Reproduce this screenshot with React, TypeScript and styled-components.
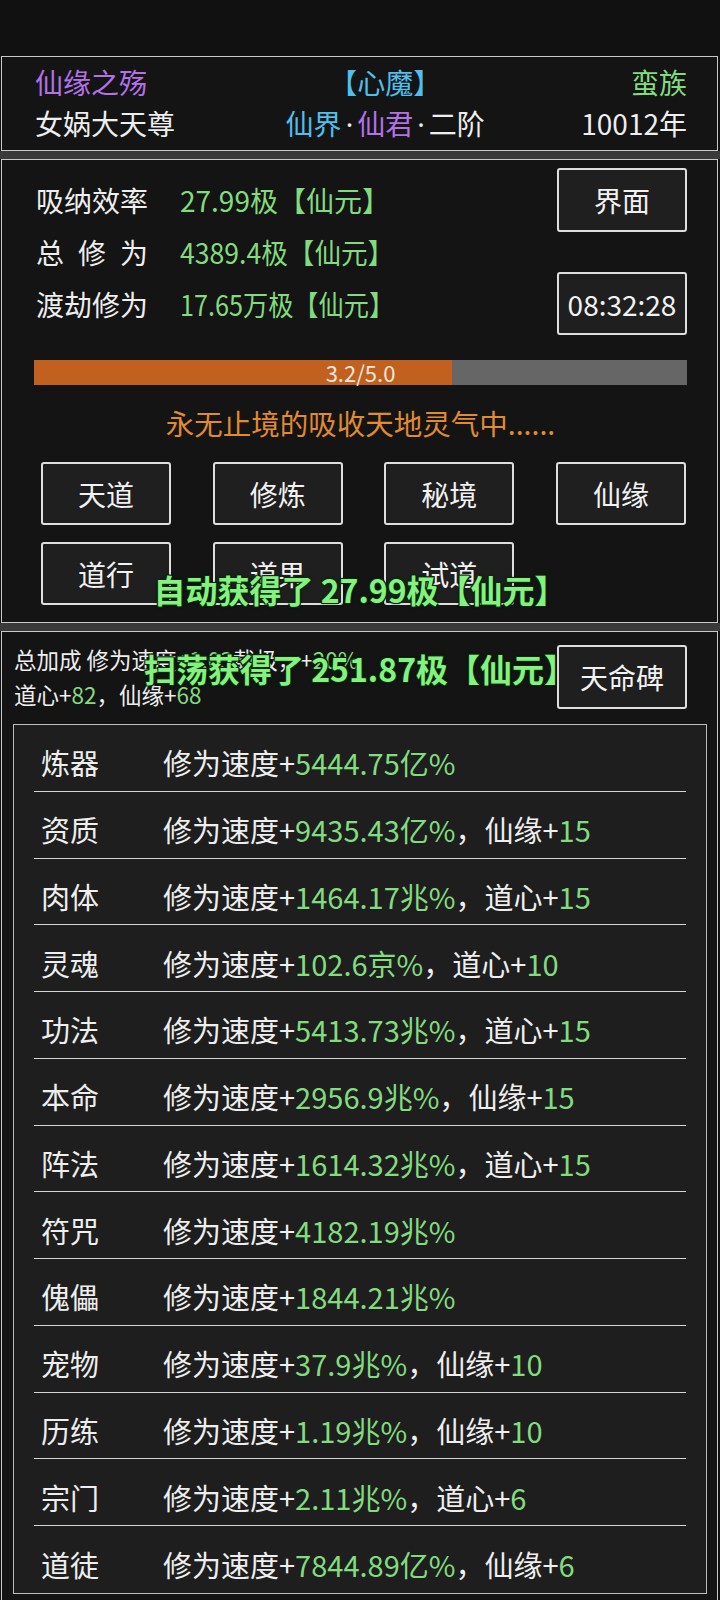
import React from 'react';
import styled, { createGlobalStyle } from 'styled-components';

const Global = createGlobalStyle`
  html, body { margin: 0; padding: 0; background: #111111; }
  body {
    font-family: "Noto Sans CJK SC", "Noto Sans", sans-serif;
    color: #eeeeee;
  }
  * { box-sizing: border-box; }
`;

const C = {
  purple: '#b272e6',
  cyan: '#4fc0ea',
  green: '#82dc7e',
  orange: '#e08a32',
  border: '#c8c8c8',
  panel: '#141414',
  box: '#1e1e1e',
};

const Page = styled.div`
  position: relative;
  width: 720px;
  background: #111111;
  display: flex;
  flex-direction: column;
`;

const StatusBar = styled.div`
  height: 56px;
  background: #111111;
`;

const Band = styled.div`
  height: 8px;
  background: #3a3a3a;
`;

const Panel = styled.section<{ $pad: string }>`
  margin: 0 2px 0 1px;
  background: ${C.panel};
  border: 1px solid ${C.border};
  padding: ${(p) => p.$pad};
`;

const Tone = styled.span<{ $c?: string }>`
  color: ${(p) => p.$c || '#eeeeee'};
`;

const Dot = styled.span`
  font-family: "Noto Sans", "Liberation Sans", sans-serif;
  color: #eeeeee;
  padding: 0 4px;
`;

/* ---------- header ---------- */
const HeaderRow = styled.div`
  display: flex;
  justify-content: space-between;
  font-size: 28px;
  line-height: 41px;
`;

const HeaderCol = styled.div<{ $align: string; $shift?: number }>`
  display: flex;
  flex-direction: column;
  text-align: ${(p) => p.$align};
  margin-left: ${(p) => p.$shift || 0}px;
  white-space: nowrap;
`;

/* ---------- stats panel ---------- */
const TopSection = styled.div`
  display: flex;
  justify-content: space-between;
  align-items: center;
`;

const StatList = styled.div`
  display: flex;
  flex-direction: column;
  padding-left: 2px;
`;

const StatRow = styled.div`
  display: flex;
  font-size: 28px;
  line-height: 52px;
  white-space: nowrap;
`;

const StatLabel = styled.span<{ $spread?: boolean }>`
  width: 144px;
  letter-spacing: ${(p) => (p.$spread ? '14px' : '0')};
`;

const StatValue = styled.span<{ $sx: number }>`
  display: inline-block;
  color: ${C.green};
  transform: scaleX(${(p) => p.$sx});
  transform-origin: left center;
`;

const SideButtons = styled.div`
  display: flex;
  flex-direction: column;
  justify-content: space-between;
  height: 167px;
`;

const Btn = styled.div<{ $h?: number }>`
  width: 130px;
  height: ${(p) => p.$h || 63}px;
  border: 2px solid #dedede;
  border-radius: 3px;
  background: #1f1f1f;
  color: #f2f2f2;
  font-size: 28px;
  display: flex;
  align-items: center;
  justify-content: center;
  white-space: nowrap;
`;

const Progress = styled.div`
  position: relative;
  margin-top: 25px;
  height: 25px;
  background: #666666;
  display: flex;
  align-items: center;
  justify-content: center;
`;

const ProgressFill = styled.div`
  position: absolute;
  left: 0;
  top: 0;
  bottom: 0;
  background: #c2601f;
`;

const ProgressText = styled.span`
  position: relative;
  font-size: 22px;
  line-height: 25px;
  color: #f4e8dc;
`;

const Status = styled.div`
  margin-top: 18px;
  text-align: center;
  font-size: 28.5px;
  line-height: 40px;
  color: ${C.orange};
`;

const ButtonGrid = styled.div`
  margin: 19px 1px 0 7px;
  display: grid;
  grid-template-columns: repeat(4, 130px);
  justify-content: space-between;
  row-gap: 17px;
`;

/* ---------- bonus panel ---------- */
const BonusHead = styled.div`
  display: flex;
  justify-content: space-between;
  align-items: center;
  padding: 0 20px 0 1px;
`;

const BonusText = styled.div`
  font-size: 22.5px;
  line-height: 35px;
  color: #eeeeee;
  white-space: nowrap;
`;

const BonusBox = styled.div`
  margin-top: 12px;
  border: 1px solid #bdbdbd;
  background: ${C.box};
  padding: 0 20px;
`;

const BonusRow = styled.div`
  height: 66.75px;
  padding: 9px 0 0 7px;
  display: flex;
  align-items: center;
  font-size: 29px;
  white-space: nowrap;
  border-bottom: 1px solid #d6d6d6;
  &:last-child { border-bottom: none; }
`;

const RowLabel = styled.span`
  width: 122px;
  color: #eeeeee;
`;

/* ---------- toasts ---------- */
const Toast = styled.div<{ $top: number }>`
  position: absolute;
  left: 0;
  right: 0;
  top: ${(p) => p.$top}px;
  text-align: center;
  font-size: 32px;
  font-weight: 700;
  line-height: 40px;
  color: #84f27e;
  text-shadow:
    -1px -1px 0 #0a2a0a, 1px -1px 0 #0a2a0a, -1px 1px 0 #0a2a0a, 1px 1px 0 #0a2a0a,
    0 0 3px #000;
  pointer-events: none;
  white-space: nowrap;
`;

type Bonus = { name: string; speed: string; extra?: [string, string] };

const bonuses: Bonus[] = [
  { name: '炼器', speed: '5444.75亿%' },
  { name: '资质', speed: '9435.43亿%', extra: ['仙缘', '15'] },
  { name: '肉体', speed: '1464.17兆%', extra: ['道心', '15'] },
  { name: '灵魂', speed: '102.6京%', extra: ['道心', '10'] },
  { name: '功法', speed: '5413.73兆%', extra: ['道心', '15'] },
  { name: '本命', speed: '2956.9兆%', extra: ['仙缘', '15'] },
  { name: '阵法', speed: '1614.32兆%', extra: ['道心', '15'] },
  { name: '符咒', speed: '4182.19兆%' },
  { name: '傀儡', speed: '1844.21兆%' },
  { name: '宠物', speed: '37.9兆%', extra: ['仙缘', '10'] },
  { name: '历练', speed: '1.19兆%', extra: ['仙缘', '10'] },
  { name: '宗门', speed: '2.11兆%', extra: ['道心', '6'] },
  { name: '道徒', speed: '7844.89亿%', extra: ['仙缘', '6'] },
];

const stats: { label: string; spread?: boolean; value: string; sx: number }[] = [
  { label: '吸纳效率', value: '27.99极【仙元】', sx: 1.0 },
  { label: '总修为', spread: true, value: '4389.4极【仙元】', sx: 0.95 },
  { label: '渡劫修为', value: '17.65万极【仙元】', sx: 0.9 },
];

const progress = 3.2 / 5.0;

export default function App() {
  return (
    <Page>
      <Global />
      <StatusBar />

      <Panel $pad="5px 30px 5px 33px">
        <HeaderRow>
          <HeaderCol $align="left">
            <Tone $c={C.purple}>仙缘之殇</Tone>
            <Tone>女娲大天尊</Tone>
          </HeaderCol>
          <HeaderCol $align="center" $shift={14}>
            <Tone $c={C.cyan}>【心魔】</Tone>
            <span>
              <Tone $c={C.cyan}>仙界</Tone>
              <Dot>·</Dot>
              <Tone $c={C.purple}>仙君</Tone>
              <Dot>·</Dot>
              <Tone>二阶</Tone>
            </span>
          </HeaderCol>
          <HeaderCol $align="right">
            <Tone $c={C.green}>蛮族</Tone>
            <Tone>10012年</Tone>
          </HeaderCol>
        </HeaderRow>
      </Panel>

      <Band />

      <Panel $pad="8px 30px 17px 32px">
        <TopSection>
          <StatList>
            {stats.map((s) => (
              <StatRow key={s.label}>
                <StatLabel $spread={s.spread}>{s.label}</StatLabel>
                <StatValue $sx={s.sx}>{s.value}</StatValue>
              </StatRow>
            ))}
          </StatList>
          <SideButtons>
            <Btn $h={64}>界面</Btn>
            <Btn $h={63}>08:32:28</Btn>
          </SideButtons>
        </TopSection>

        <Progress>
          <ProgressFill style={{ width: `${progress * 100}%` }} />
          <ProgressText>3.2/5.0</ProgressText>
        </Progress>

        <Status>永无止境的吸收天地灵气中......</Status>

        <ButtonGrid>
          {['天道', '修炼', '秘境', '仙缘', '道行', '道果', '试道'].map((t) => (
            <Btn key={t}>{t}</Btn>
          ))}
        </ButtonGrid>
      </Panel>

      <Band />

      <Panel $pad="10px 10px 14px 11px">
        <BonusHead>
          <BonusText>
            <div>
              总加成 修为速度+<Tone $c={C.green}>1.03</Tone>载极，+<Tone $c={C.green}>20%</Tone>
            </div>
            <div>
              道心+<Tone $c={C.green}>82</Tone>，仙缘+<Tone $c={C.green}>68</Tone>
            </div>
          </BonusText>
          <Btn $h={64}>天命碑</Btn>
        </BonusHead>

        <BonusBox>
          {bonuses.map((b) => (
            <BonusRow key={b.name}>
              <RowLabel>{b.name}</RowLabel>
              <span>
                修为速度+<Tone $c={C.green}>{b.speed}</Tone>
                {b.extra && (
                  <>
                    ，{b.extra[0]}+<Tone $c={C.green}>{b.extra[1]}</Tone>
                  </>
                )}
              </span>
            </BonusRow>
          ))}
        </BonusBox>
      </Panel>

      <Toast $top={569}>自动获得了 27.99极【仙元】</Toast>
      <Toast $top={648}>扫荡获得了 251.87极【仙元】</Toast>
    </Page>
  );
}
